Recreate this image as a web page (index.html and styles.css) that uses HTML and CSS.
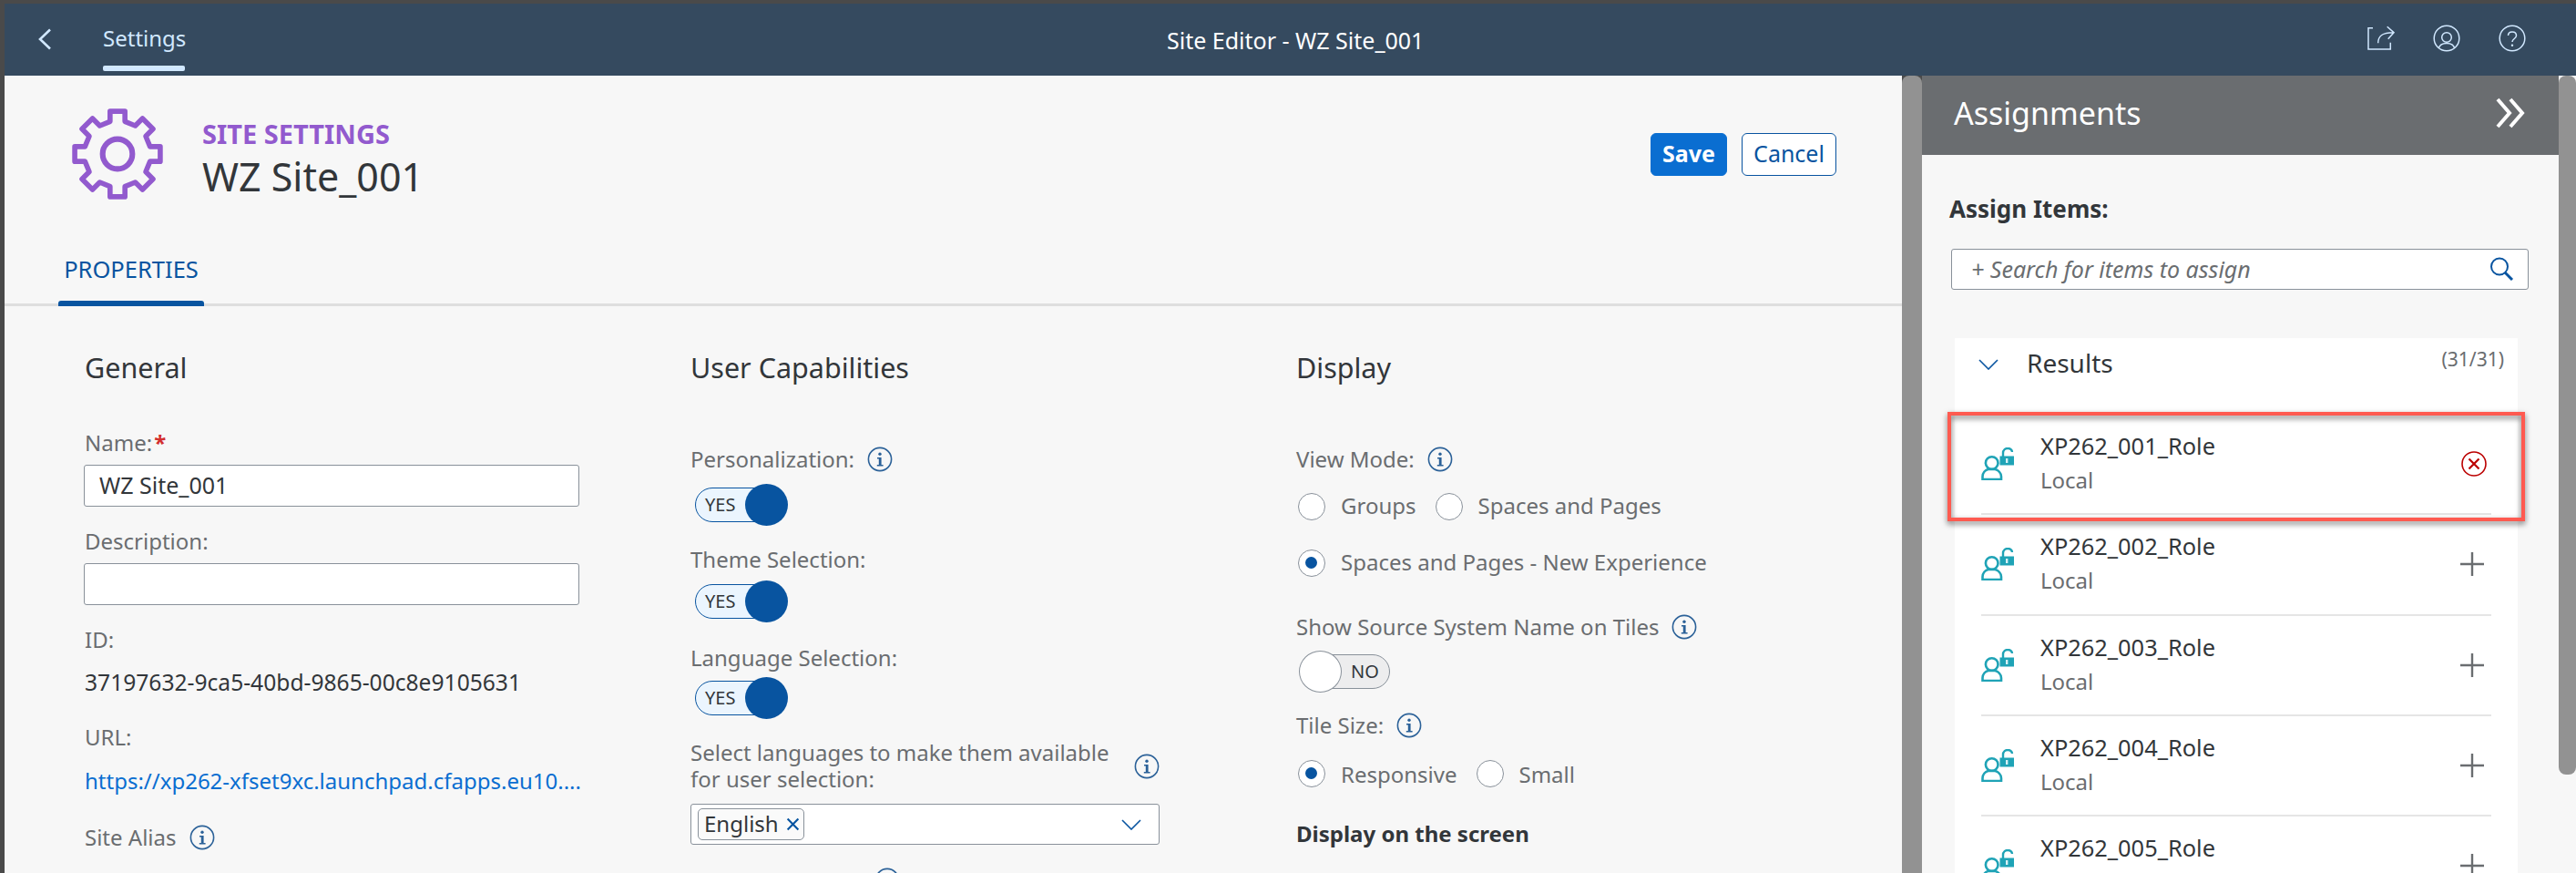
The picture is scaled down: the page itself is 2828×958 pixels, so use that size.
FILE: index.html
```html
<!DOCTYPE html>
<html lang="en">
<head>
    <meta charset="UTF-8">
    <title>Site Editor - WZ Site_001</title>
    <link rel="stylesheet" href="styles.css">
</head>
<body>
    <svg class="icon-defs" width="0" height="0">
        <defs>
            <symbol id="info" viewBox="0 0 28 28">
                <circle cx="14" cy="14" r="12.6" fill="none" stroke="#2b6198" stroke-width="1.6"/>
                <circle cx="14" cy="8.2" r="1.7" fill="#2b6198"/>
                <path d="M11 12h4.6v8h2v1.6h-6.8V20h2v-6.4H11z" fill="#2b6198"/>
            </symbol>
            <symbol id="role" viewBox="0 0 37 36">
                <circle cx="11.7" cy="17" r="6.8" fill="none" stroke="#1fa3b6" stroke-width="2.6"/>
                <path d="M1.500 35v-3c0-4 3-7 6-8h8c3 1 6.500 4 6.500 8v3z" fill="none" stroke="#1fa3b6" stroke-width="2.600"/>
                <path d="M24 10V6c0-6.500 10-6.500 10-1" fill="none" stroke="#1fa3b6" stroke-width="2.400"/>
                <path d="M20.500 9.500H36v10H20.500z" fill="#1fa3b6"/>
                <path d="M27 12h2.400v5H27z" fill="#d8f0f4"/>
            </symbol>
            <symbol id="plus" viewBox="0 0 26 26">
                <path d="M13 0v26M0 13h26" fill="none" stroke="#6a6d70" stroke-width="2.4"/>
            </symbol>
        </defs>
    </svg>

    <header class="shell-bar">
        <svg class="back-icon" viewBox="0 0 16 24"><path d="M14 1.500 3 12l11 10.500" fill="none" stroke="#d1e8ff" stroke-width="2.600"/></svg>
        <a class="shell-tab">Settings</a>
        <div class="shell-title">Site Editor - WZ Site_001</div>
        <div class="shell-actions">
            <svg class="shell-icon" viewBox="0 0 30 30"><path d="M6 3.700H1V27h24.300v-7.300M11.700 20.300c0-7.500 4-11.600 16.500-11.600M21.700 2.300 29 8.700l-6.300 7" fill="none" stroke="#d1e8ff" stroke-width="1.500"/></svg>
            <svg class="shell-icon" viewBox="0 0 30 30"><circle cx="15" cy="15" r="13.800" fill="none" stroke="#d1e8ff" stroke-width="1.500"/><circle cx="15" cy="14" r="5.300" fill="none" stroke="#d1e8ff" stroke-width="1.500"/><path d="M6.300 26c1-4 4-5.500 8.700-5.500s7.700 1.500 8.700 5.500" fill="none" stroke="#d1e8ff" stroke-width="1.500"/></svg>
            <svg class="shell-icon" viewBox="0 0 30 30"><circle cx="15" cy="15" r="13.800" fill="none" stroke="#d1e8ff" stroke-width="1.500"/><path d="M10.500 12c0-5.500 9-5.500 9 0 0 3.500-4.500 3.500-4.500 7" fill="none" stroke="#d1e8ff" stroke-width="1.500"/><circle cx="15" cy="22.800" r="1.200" fill="#d1e8ff"/></svg>
        </div>
    </header>

    <div class="workspace">
        <main class="editor">
            <div class="page-head">
                <div class="title-row">
                    <svg class="gear" viewBox="-50 -50 100 100">
                        <polygon points="-8,-35 -8,-46 8,-46 8,-35 19.1,-30.4 26.9,-38.2 38.2,-26.9 30.4,-19.1 35,-8 46,-8 46,8 35,8 30.4,19.1 38.2,26.9 26.9,38.2 19.1,30.4 8,35 8,46 -8,46 -8,35 -19.1,30.4 -26.9,38.2 -38.2,26.9 -30.4,19.1 -35,8 -46,8 -46,-8 -35,-8 -30.4,-19.1 -38.2,-26.9 -26.9,-38.2 -19.1,-30.4" fill="none" stroke="#925ace" stroke-width="5.5" stroke-linejoin="round"/>
                        <circle r="16" fill="none" stroke="#925ace" stroke-width="6"/>
                    </svg>
                    <div class="title-text">
                        <div class="eyebrow">SITE SETTINGS</div>
                        <h1>WZ Site_001</h1>
                    </div>
                    <div class="page-actions">
                        <button class="btn btn-save">Save</button>
                        <button class="btn btn-cancel">Cancel</button>
                    </div>
                </div>
                <div class="tab-bar"><span class="tab">PROPERTIES</span></div>
            </div>

            <div class="columns">
                <section class="col col-general">
                    <h2>General</h2>
                    <div class="lbl first-general">Name:<span class="req">*</span></div>
                    <div class="text-input after-lbl">WZ Site_001</div>
                    <div class="lbl after-input">Description:</div>
                    <div class="text-input after-lbl"></div>
                    <div class="lbl after-input">ID:</div>
                    <div class="val id-val">37197632-9ca5-40bd-9865-00c8e9105631</div>
                    <div class="lbl url-lbl">URL:</div>
                    <a class="val link">https://xp262-xfset9xc.launchpad.cfapps.eu10....</a>
                    <div class="lbl alias-lbl">Site Alias <svg class="info"><use href="#info"/></svg></div>
                </section>

                <section class="col col-user">
                    <h2>User Capabilities</h2>
                    <div class="lbl first-cap">Personalization: <svg class="info"><use href="#info"/></svg></div>
                    <div class="toggle toggle-1"><span class="track">YES</span><span class="knob"></span></div>
                    <div class="lbl cap-lbl">Theme Selection:</div>
                    <div class="toggle toggle-2"><span class="track">YES</span><span class="knob"></span></div>
                    <div class="lbl cap-lbl lang-sel">Language Selection:</div>
                    <div class="toggle toggle-3"><span class="track">YES</span><span class="knob"></span></div>
                    <div class="lang-lbl">
                        <div>Select languages to make them available<br>for user selection:</div>
                        <svg class="info"><use href="#info"/></svg>
                    </div>
                    <div class="multi-input">
                        <span class="token">English <svg class="token-x" viewBox="0 0 14 14"><path d="M1.500 1.500l11 11M12.500 1.500l-11 11" fill="none" stroke="#0854a0" stroke-width="2"/></svg></span>
                        <svg class="select-arrow" viewBox="0 0 22 12"><path d="M1 1l10 10L21 1" fill="none" stroke="#0854a0" stroke-width="1.600"/></svg>
                    </div>
                    <svg class="info next-info"><use href="#info"/></svg>
                </section>

                <section class="col col-display">
                    <h2>Display</h2>
                    <div class="lbl first-cap">View Mode: <svg class="info"><use href="#info"/></svg></div>
                    <div class="radio-row row-a">
                        <span class="radio"></span><span class="radio-text">Groups</span>
                        <span class="radio"></span><span class="radio-text">Spaces and Pages</span>
                    </div>
                    <div class="radio-row row-b">
                        <span class="radio on"></span><span class="radio-text">Spaces and Pages - New Experience</span>
                    </div>
                    <div class="lbl source-lbl">Show Source System Name on Tiles <svg class="info"><use href="#info"/></svg></div>
                    <div class="toggle toggle-off"><span class="track">NO</span><span class="knob"></span></div>
                    <div class="lbl tile-lbl">Tile Size: <svg class="info"><use href="#info"/></svg></div>
                    <div class="radio-row row-c">
                        <span class="radio on"></span><span class="radio-text">Responsive</span>
                        <span class="radio"></span><span class="radio-text">Small</span>
                    </div>
                    <div class="lbl screen-lbl">Display on the screen</div>
                </section>
            </div>
        </main>

        <div class="scroll-thumb"></div>

        <aside class="assign-panel">
            <div class="panel-head">
                <span>Assignments</span>
                <svg class="collapse" viewBox="0 0 34 34"><path d="M3 2l13 15L3 32M17 2l13 15-13 15" fill="none" stroke="#fff" stroke-width="4"/></svg>
            </div>
            <div class="assign-label">Assign Items:</div>
            <div class="search">
                <span>+ Search for items to assign</span>
                <svg class="search-icon" viewBox="0 0 28 26"><circle cx="11" cy="10.500" r="9" fill="none" stroke="#0854a0" stroke-width="2"/><path d="M17 17l8 8" fill="none" stroke="#0854a0" stroke-width="3"/></svg>
            </div>
            <div class="results">
                <div class="results-head">
                    <svg class="results-chev" viewBox="0 0 22 12"><path d="M1 1l10 10L21 1" fill="none" stroke="#0854a0" stroke-width="1.600"/></svg>
                    <span class="results-title">Results</span>
                    <span class="results-count">(31/31)</span>
                </div>
                <div class="item picked">
                    <svg class="role-icon"><use href="#role"/></svg>
                    <div class="item-text"><div class="item-name">XP262_001_Role</div><div class="item-sub">Local</div></div>
                    <svg class="remove" viewBox="0 0 28 28"><circle cx="14" cy="14" r="13" fill="none" stroke="#bb0000" stroke-width="1.600"/><path d="M8.500 8.500l11 11M19.500 8.500l-11 11" fill="none" stroke="#bb0000" stroke-width="2.200"/></svg>
                </div>
                <div class="item">
                    <svg class="role-icon"><use href="#role"/></svg>
                    <div class="item-text"><div class="item-name">XP262_002_Role</div><div class="item-sub">Local</div></div>
                    <svg class="add"><use href="#plus"/></svg>
                </div>
                <div class="item">
                    <svg class="role-icon"><use href="#role"/></svg>
                    <div class="item-text"><div class="item-name">XP262_003_Role</div><div class="item-sub">Local</div></div>
                    <svg class="add"><use href="#plus"/></svg>
                </div>
                <div class="item">
                    <svg class="role-icon"><use href="#role"/></svg>
                    <div class="item-text"><div class="item-name">XP262_004_Role</div><div class="item-sub">Local</div></div>
                    <svg class="add"><use href="#plus"/></svg>
                </div>
                <div class="item">
                    <svg class="role-icon"><use href="#role"/></svg>
                    <div class="item-text"><div class="item-name">XP262_005_Role</div><div class="item-sub">Local</div></div>
                    <svg class="add"><use href="#plus"/></svg>
                </div>
            </div>
        </aside>

        <div class="panel-scroll"><div class="panel-thumb"></div></div>
    </div>
</body>
</html>
```

FILE: styles.css
```css
html, body {
    margin: 0;
    height: 100%;
}
body {
    width: 2828px;
    height: 958px;
    overflow: hidden;
    box-sizing: border-box;
    padding: 4px 0 0 5px;
    background-color: #4a4a4a;
    font-family: "Noto Sans", Arial, sans-serif;
    font-size: 24px;
    color: #32363a;
}
.icon-defs {
    position: absolute;
}
svg {
    display: block;
    flex: none;
}

/* top bar */
.shell-bar {
    display: flex;
    align-items: center;
    height: 79px;
    background-color: #354a5f;
    position: relative;
}
.back-icon {
    width: 16px;
    height: 24px;
    margin-left: 36px;
    margin-top: -2px;
}
.shell-tab {
    align-self: stretch;
    display: flex;
    align-items: center;
    margin-left: 56px;
    padding-bottom: 4px;
    box-sizing: border-box;
    width: 90px;
    color: #d1e8ff;
    position: relative;
}
.shell-tab::after {
    content: "";
    position: absolute;
    left: 0;
    right: 0;
    bottom: 5px;
    height: 6px;
    border-radius: 2px;
    background-color: #d1e8ff;
}
.shell-title {
    position: absolute;
    left: 1276px;
    top: 23px;
    font-size: 25px;
    color: #fff;
}
.shell-actions {
    display: flex;
    align-items: center;
    gap: 42px;
    margin-left: auto;
    margin-right: 55px;
    margin-top: -3px;
}
.shell-icon {
    width: 30px;
    height: 30px;
}

/* main area */
.workspace {
    display: flex;
    height: 875px;
}
.editor {
    width: 2083px;
    background-color: #f7f7f7;
}
.page-head {
    height: 253px;
    box-sizing: border-box;
    padding-top: 35px;
    border-bottom: 3px solid #dedede;
}
.title-row {
    display: flex;
    height: 102px;
    padding-left: 73px;
}
.gear {
    width: 102px;
    height: 102px;
}
.title-text {
    margin-left: 42px;
    padding-top: 12px;
}
.eyebrow {
    font-size: 29px;
    line-height: 34px;
    font-weight: 700;
    color: #925ace;
}
h1 {
    margin: 0;
    font-size: 43px;
    line-height: 60px;
    font-weight: 400;
}
.page-actions {
    display: flex;
    gap: 16px;
    margin-left: auto;
    margin-right: 72px;
    padding-top: 28px;
}
.btn {
    height: 47px;
    border-radius: 6px;
    font-family: inherit;
    font-size: 25px;
    padding: 0 0 3px;
}
.btn-save {
    width: 84px;
    border: 1px solid #0a6ed1;
    background-color: #0a6ed1;
    color: #fff;
    font-weight: 700;
}
.btn-cancel {
    width: 104px;
    border: 1px solid #0854a0;
    background-color: #fff;
    color: #0854a0;
}
.tab-bar {
    margin-top: 57px;
    padding-left: 59px;
}
.tab {
    display: block;
    width: 160px;
    height: 59px;
    line-height: 36px;
    text-align: center;
    font-size: 25.5px;
    color: #0854a0;
    position: relative;
}
.tab::after {
    content: "";
    position: absolute;
    left: 0;
    right: 0;
    bottom: 0;
    height: 6px;
    border-radius: 3px 3px 0 0;
    background-color: #0854a0;
}
.columns {
    display: grid;
    grid-template-columns: repeat(3, 665px);
    padding: 49px 0 0 88px;
}
.col {
    height: 620px;
}
h2 {
    margin: 0;
    font-size: 30.5px;
    line-height: 36px;
    font-weight: 400;
}
.lbl {
    display: flex;
    align-items: center;
    gap: 14px;
    height: 32px;
    box-sizing: border-box;
    padding-bottom: 2px;
    color: #6a6d70;
}
.req {
    color: #d32f2f;
    font-weight: 700;
    margin-left: -12px;
}
.text-input {
    width: 544px;
    height: 46px;
    box-sizing: border-box;
    margin-left: -1px;
    padding-left: 16px;
    font-size: 25px;
    line-height: 42px;
    background-color: #fff;
    border: 1px solid #89919a;
    border-radius: 3px;
}
.val {
    display: block;
    height: 32px;
    line-height: 32px;
}
.id-val {
    font-size: 24.6px;
}
.link {
    color: #0a6ed1;
    margin-top: 16px;
}
.first-general { margin-top: 49px; }
.after-lbl { margin-top: 8px; }
.after-input { margin-top: 22px; }
.id-val { margin-top: 15px; }
.url-lbl { margin-top: 28px; }
.alias-lbl { margin-top: 30px; }
.first-cap { margin-top: 67px; }
.cap-lbl { margin-top: 21px; }
.lang-sel { margin-top: 23px; }
.info {
    width: 28px;
    height: 28px;
    margin-top: 2px;
}
.next-info {
    margin: 25px 0 0 202px;
}

/* switches */
.toggle {
    position: relative;
    height: 46px;
    margin-left: 5px;
    width: 102px;
}
.toggle-1 { margin-top: 11px; }
.toggle-2 { margin-top: 7px; }
.toggle-3 { margin-top: 5px; }
.track {
    position: absolute;
    left: 0;
    top: 4px;
    width: 90px;
    height: 38px;
    box-sizing: border-box;
    padding-left: 10px;
    font-size: 20px;
    line-height: 36px;
    background-color: #ebf5fe;
    border: 1px solid #0854a0;
    border-radius: 19px;
}
.knob {
    position: absolute;
    left: 55px;
    top: 0;
    width: 47px;
    height: 46px;
    border-radius: 50%;
    background-color: #0854a0;
}
.toggle-off {
    margin: 10px 0 0 3px;
}
.toggle-off .track {
    left: 4px;
    width: 96px;
    padding-left: 52px;
    background-color: #ededee;
    border-color: #89919a;
}
.toggle-off .knob {
    left: 0;
    box-sizing: border-box;
    background-color: #fff;
    border: 1px solid #89919a;
}

/* language select */
.lang-lbl {
    display: flex;
    align-items: center;
    justify-content: space-between;
    width: 515px;
    margin-top: 22px;
    line-height: 29px;
    color: #6a6d70;
}
.multi-input {
    display: flex;
    align-items: center;
    justify-content: space-between;
    box-sizing: border-box;
    width: 515px;
    height: 45px;
    margin-top: 13px;
    padding: 0 19px 0 7px;
    background-color: #fff;
    border: 1px solid #89919a;
    border-radius: 3px;
}
.token {
    display: flex;
    align-items: center;
    gap: 8px;
    box-sizing: border-box;
    width: 117px;
    height: 35px;
    padding: 0 0 2px 6px;
    background-color: #fafafa;
    border: 1px solid #89919a;
    border-radius: 5px;
}
.token-x {
    width: 15px;
    height: 15px;
    margin-top: 2px;
}
.select-arrow {
    width: 22px;
    height: 12px;
}

/* radios */
.radio-row {
    display: flex;
    align-items: center;
    height: 32px;
    color: #6a6d70;
}
.radio {
    position: relative;
    width: 30px;
    height: 30px;
    box-sizing: border-box;
    margin: 0 17px 0 2px;
    background-color: #fff;
    border: 1.5px solid #89919a;
    border-radius: 50%;
}
.radio.on::after {
    content: "";
    position: absolute;
    left: 7px;
    top: 7px;
    width: 13px;
    height: 13px;
    border-radius: 50%;
    background-color: #0854a0;
}
.radio-text {
    position: relative;
    top: -2px;
    margin-right: 19px;
}
.row-a { margin-top: 20px; }
.row-b { margin-top: 30px; }
.row-c { margin-top: 21px; }
.row-c .radio-text { top: 0; }
.source-lbl { margin-top: 38px; }
.tile-lbl { margin-top: 20px; }
.screen-lbl {
    margin-top: 34px;
    color: #32363a;
    font-weight: 700;
}

/* scrollbars */
.scroll-thumb {
    width: 22px;
    background-color: #929292;
    border-radius: 8px 8px 0 0;
}
.panel-scroll {
    width: 19px;
    background-color: #f7f7f7;
}
.panel-thumb {
    height: 767px;
    background-color: #929292;
    border-radius: 8px;
}

/* assignments */
.assign-panel {
    width: 699px;
    box-sizing: border-box;
    background-color: #f7f7f7;
}
.panel-head {
    display: flex;
    align-items: center;
    justify-content: space-between;
    height: 87px;
    box-sizing: border-box;
    padding: 0 36px 6px 35px;
    background-color: #6a6d70;
    color: #fff;
    font-size: 34px;
}
.collapse {
    width: 34px;
    height: 34px;
}
.assign-label {
    margin: 44px 0 0 30px;
    height: 32px;
    line-height: 30px;
    font-size: 26px;
    font-weight: 700;
}
.search {
    display: flex;
    align-items: center;
    justify-content: space-between;
    box-sizing: border-box;
    width: 634px;
    height: 45px;
    margin: 27px 0 0 32px;
    padding: 0 14px 2px 21px;
    font-size: 25px;
    background-color: #fff;
    border: 1px solid #89919a;
    border-radius: 3px;
    color: #6a6d70;
    font-style: italic;
}
.search-icon {
    width: 28px;
    height: 26px;
}
.results {
    width: 618px;
    height: 600px;
    margin: 53px 0 0 36px;
    background-color: #fff;
    position: relative;
}
.results-head {
    display: flex;
    height: 84px;
    box-sizing: border-box;
    position: relative;
}
.results-chev {
    width: 22px;
    height: 12px;
    margin: 23px 0 0 26px;
}
.results-title {
    margin: 9px 0 0 31px;
    font-size: 28px;
    line-height: 36px;
}
.results-count {
    margin: 10px 15px 0 auto;
    font-size: 21px;
    line-height: 26px;
    color: #6a6d70;
}
.item {
    display: flex;
    align-items: center;
    height: 110.33px;
    box-sizing: border-box;
    margin: 0 29px;
    border-bottom: 2px solid #e5e5e5;
}
.picked {
    position: relative;
}
.picked::after {
    content: "";
    position: absolute;
    left: -37px;
    right: -37px;
    top: -3px;
    height: 120px;
    box-sizing: border-box;
    border: 4px solid #ff5a50;
    filter: drop-shadow(0 3px 3px rgba(0, 0, 0, 0.55));
}
.role-icon {
    width: 37px;
    height: 36px;
}
.item-text {
    margin: -2px 0 0 28px;
    flex: 1;
}
.item-name {
    font-size: 25.4px;
    line-height: 35px;
}
.item-sub {
    margin-top: 2px;
    line-height: 35px;
    color: #6a6d70;
}
.add {
    width: 26px;
    height: 26px;
    margin-right: 8px;
}
.remove {
    width: 28px;
    height: 28px;
    margin-right: 5px;
}
```
